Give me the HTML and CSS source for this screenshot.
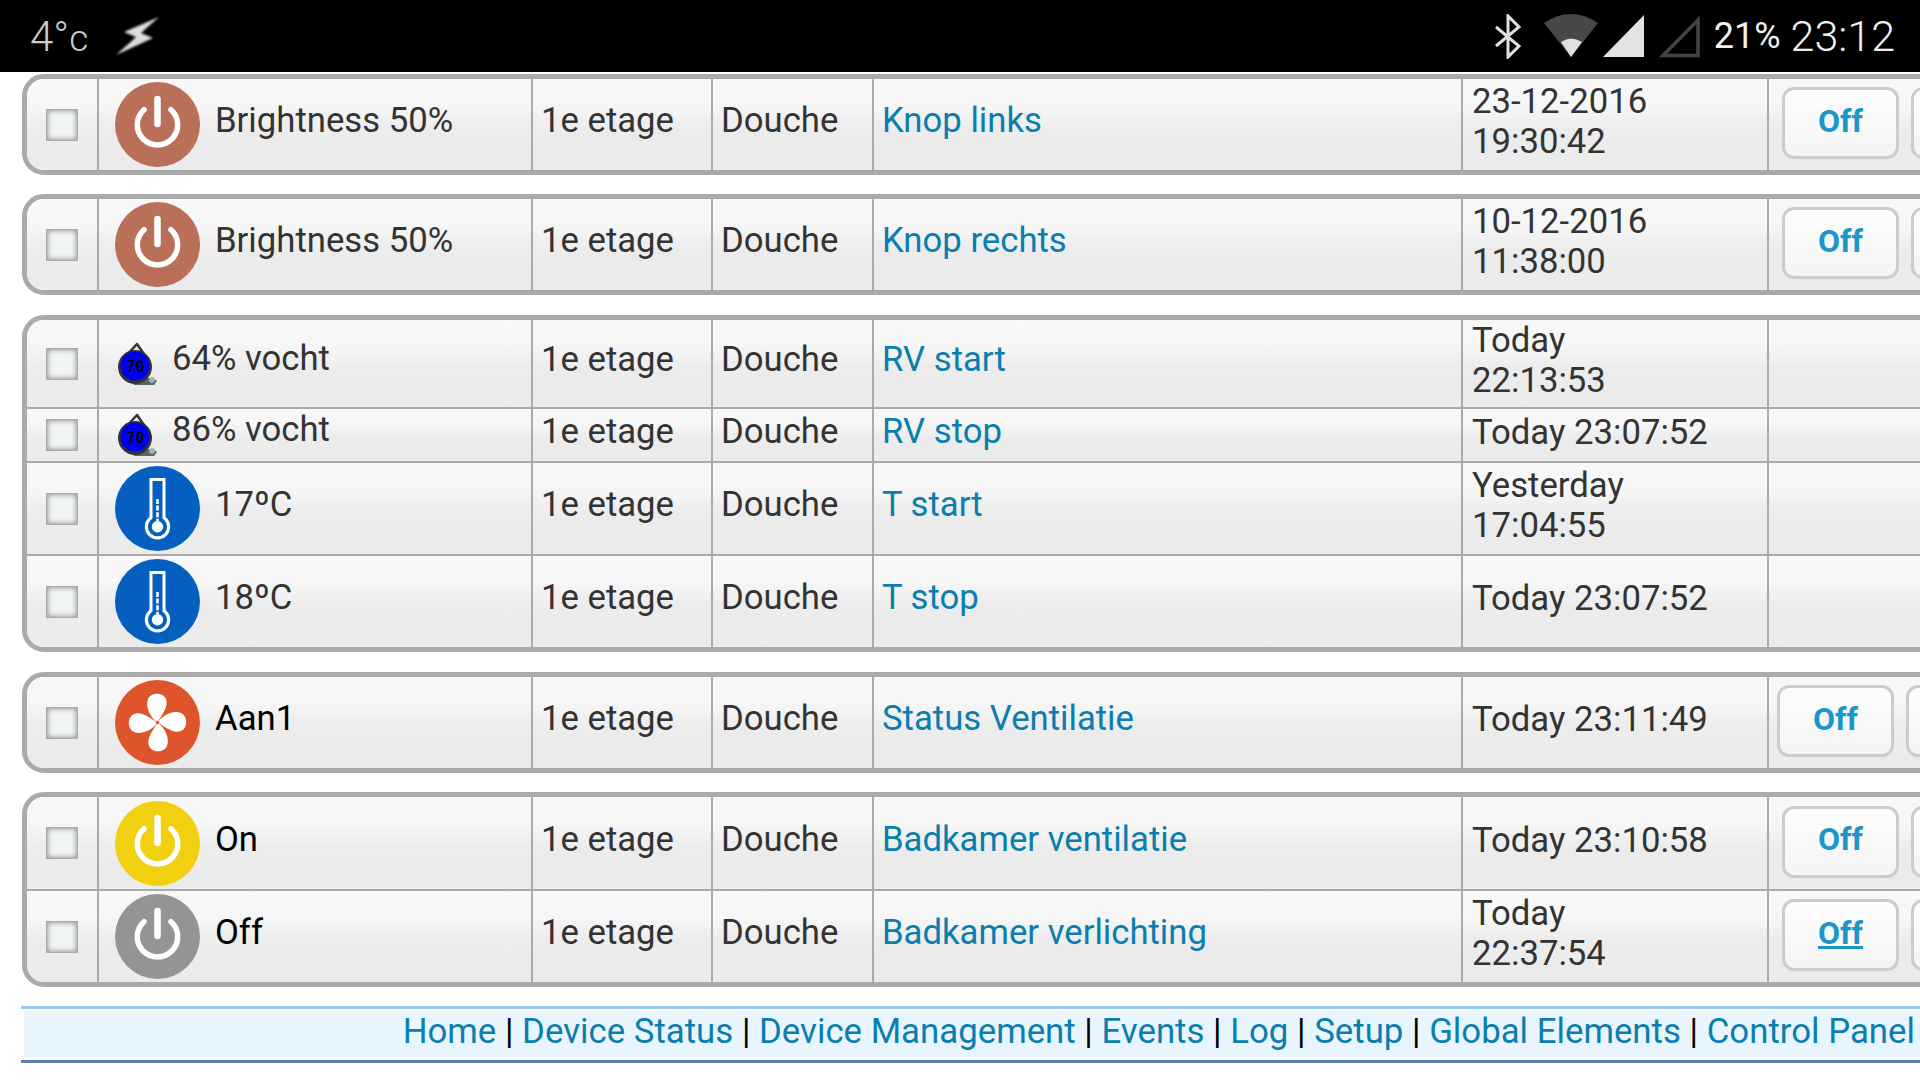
FILE: index.html
```html
<!DOCTYPE html>
<html lang="en">
<head>
    <meta charset="UTF-8">
    <meta name="viewport" content="width=device-width, initial-scale=1.0">
    <title>Device Status</title>
    <link rel="stylesheet" href="styles.css">
</head>
<body>

    <svg class="defs" width="0" height="0">
        <defs>
            <g id="power">
                <path d="M29 27.7A20.2 20.2 0 1 0 56 27.7" fill="none" stroke="#fff" stroke-width="5.5" stroke-linecap="round"/>
                <path d="M42.5 17V42" fill="none" stroke="#fff" stroke-width="6.5" stroke-linecap="round"/>
            </g>
            <g id="thermo">
                <circle cx="42.5" cy="42.5" r="42.5" fill="#045fbf"/>
                <rect x="34.5" y="12" width="16" height="42" fill="#fff"/>
                <circle cx="42.5" cy="60.7" r="12.7" fill="#fff"/>
                <circle cx="42.5" cy="60.7" r="9.6" fill="#045fbf"/>
                <rect x="37.5" y="15" width="10" height="42" fill="#045fbf"/>
                <circle cx="42.5" cy="60.7" r="5.7" fill="#fff"/>
                <path d="M42.5 33V55" stroke="#fff" stroke-width="2.6" stroke-dasharray="5 1.6"/>
            </g>
            <g id="drop">
                <path d="M21 2L9 15H30Z" fill="#e8e8e8" stroke="#333" stroke-width="2.5" stroke-linejoin="round"/>
                <path d="M16 36H37L41 39L38 43H18Z" fill="#4f6a6a"/>
                <circle cx="36" cy="38" r="3" fill="#a4b0b0"/>
                <circle cx="19" cy="25" r="17" fill="#333"/>
                <circle cx="19" cy="24" r="14.5" fill="#0000f0"/>
                <text x="19" y="30" class="drop-label">70</text>
            </g>
        </defs>
    </svg>

    <div class="status-bar">
        <div class="status-left">
            <span class="temp">4°<small>c</small></span>
            <svg class="bolt" width="48" height="48" viewBox="0 0 48 48">
                <polygon points="46,5 11,20 23,25 3,43 40,26 28,21" fill="#ddd"/>
            </svg>
        </div>
        <div class="status-right">
            <svg class="sys-icon bt" width="29" height="45" viewBox="0 0 29 45">
                <path d="M2 13L25 32L14 43V2L25 13L2 32" fill="none" stroke="#e0e0e0" stroke-width="3"/>
            </svg>
            <svg class="sys-icon wifi" width="54" height="44" viewBox="0 0 54 44">
                <path d="M0 9Q27 -9 54 9L27 43Z" fill="#484848"/>
                <path d="M17 28Q27 21 38 28L27 43Z" fill="#e0e0e0"/>
            </svg>
            <svg class="sys-icon signal" width="42" height="44" viewBox="0 0 42 44">
                <polygon points="0,43 41,43 41,1" fill="#e3e3e3"/>
            </svg>
            <svg class="sys-icon signal-off" width="44" height="44" viewBox="0 0 44 44">
                <polygon points="6,41.5 41,41.5 41,6" fill="none" stroke="#444" stroke-width="3.5"/>
            </svg>
            <span class="battery">21%</span>
            <span class="clock">23:12</span>
        </div>
    </div>

    <div class="groups">

        <div class="group">
            <table class="devices">
                <colgroup><col class="c-check"><col class="c-state"><col class="c-floor"><col class="c-room"><col class="c-name"><col class="c-seen"><col></colgroup>
                <tr class="row-full">
                    <td class="check"><input type="checkbox" class="row-check"></td>
                    <td class="state"><div class="state-inner">
                        <svg class="icon" width="85" height="85" viewBox="0 0 85 85"><circle cx="42.5" cy="42.5" r="42.5" fill="#b96f58"/><use href="#power"/></svg>
                        <span class="state-text">Brightness 50%</span>
                    </div></td>
                    <td>1e etage</td>
                    <td>Douche</td>
                    <td><a href="#" class="name">Knop links</a></td>
                    <td class="seen">23-12-2016<br>19:30:42</td>
                    <td class="actions"><div class="btns"><a href="#" class="btn">Off</a><a href="#" class="btn"></a></div></td>
                </tr>
            </table>
        </div>

        <div class="group">
            <table class="devices">
                <colgroup><col class="c-check"><col class="c-state"><col class="c-floor"><col class="c-room"><col class="c-name"><col class="c-seen"><col></colgroup>
                <tr class="row-full">
                    <td class="check"><input type="checkbox" class="row-check"></td>
                    <td class="state"><div class="state-inner">
                        <svg class="icon" width="85" height="85" viewBox="0 0 85 85"><circle cx="42.5" cy="42.5" r="42.5" fill="#b96f58"/><use href="#power"/></svg>
                        <span class="state-text">Brightness 50%</span>
                    </div></td>
                    <td>1e etage</td>
                    <td>Douche</td>
                    <td><a href="#" class="name">Knop rechts</a></td>
                    <td class="seen">10-12-2016<br>11:38:00</td>
                    <td class="actions"><div class="btns"><a href="#" class="btn">Off</a><a href="#" class="btn"></a></div></td>
                </tr>
            </table>
        </div>

        <div class="group group-wide">
            <table class="devices">
                <colgroup><col class="c-check"><col class="c-state"><col class="c-floor"><col class="c-room"><col class="c-name"><col class="c-seen"><col></colgroup>
                <tr class="row-mid">
                    <td class="check"><input type="checkbox" class="row-check"></td>
                    <td class="state"><div class="state-inner small">
                        <svg class="icon-small" width="43" height="44" viewBox="0 0 43 44"><use href="#drop"/></svg>
                        <span class="state-text">64% vocht</span>
                    </div></td>
                    <td>1e etage</td>
                    <td>Douche</td>
                    <td><a href="#" class="name">RV start</a></td>
                    <td class="seen">Today<br>22:13:53</td>
                    <td></td>
                </tr>
                <tr class="row-short">
                    <td class="check"><input type="checkbox" class="row-check"></td>
                    <td class="state"><div class="state-inner small">
                        <svg class="icon-small" width="43" height="44" viewBox="0 0 43 44"><use href="#drop"/></svg>
                        <span class="state-text">86% vocht</span>
                    </div></td>
                    <td>1e etage</td>
                    <td>Douche</td>
                    <td><a href="#" class="name">RV stop</a></td>
                    <td class="seen">Today 23:07:52</td>
                    <td></td>
                </tr>
                <tr class="row-full">
                    <td class="check"><input type="checkbox" class="row-check"></td>
                    <td class="state"><div class="state-inner">
                        <svg class="icon" width="85" height="85" viewBox="0 0 85 85"><use href="#thermo"/></svg>
                        <span class="state-text">17ºC</span>
                    </div></td>
                    <td>1e etage</td>
                    <td>Douche</td>
                    <td><a href="#" class="name">T start</a></td>
                    <td class="seen">Yesterday<br>17:04:55</td>
                    <td></td>
                </tr>
                <tr class="row-full">
                    <td class="check"><input type="checkbox" class="row-check"></td>
                    <td class="state"><div class="state-inner">
                        <svg class="icon" width="85" height="85" viewBox="0 0 85 85"><use href="#thermo"/></svg>
                        <span class="state-text">18ºC</span>
                    </div></td>
                    <td>1e etage</td>
                    <td>Douche</td>
                    <td><a href="#" class="name">T stop</a></td>
                    <td class="seen">Today 23:07:52</td>
                    <td></td>
                </tr>
            </table>
        </div>

        <div class="group">
            <table class="devices">
                <colgroup><col class="c-check"><col class="c-state"><col class="c-floor"><col class="c-room"><col class="c-name"><col class="c-seen"><col></colgroup>
                <tr class="row-full">
                    <td class="check"><input type="checkbox" class="row-check"></td>
                    <td class="state"><div class="state-inner">
                        <svg class="icon" width="85" height="85" viewBox="0 0 85 85">
                            <circle cx="42.5" cy="42.5" r="42.5" fill="#de552b"/>
                            <g fill="#fff">
                                <path id="petal" d="M42.5 42.5C35 37 30 27 33 19C36 12 48 12 51 19C54 27 46 36 42.5 42.5Z"/>
                                <use href="#petal" transform="rotate(90 42.5 42.5)"/>
                                <use href="#petal" transform="rotate(180 42.5 42.5)"/>
                                <use href="#petal" transform="rotate(270 42.5 42.5)"/>
                            </g>
                            <circle cx="42.5" cy="42.5" r="1.8" fill="#de552b"/>
                        </svg>
                        <span class="state-text on">Aan1</span>
                    </div></td>
                    <td>1e etage</td>
                    <td>Douche</td>
                    <td><a href="#" class="name">Status Ventilatie</a></td>
                    <td class="seen">Today 23:11:49</td>
                    <td class="actions"><div class="btns shifted"><a href="#" class="btn">Off</a><a href="#" class="btn"></a></div></td>
                </tr>
            </table>
        </div>

        <div class="group">
            <table class="devices">
                <colgroup><col class="c-check"><col class="c-state"><col class="c-floor"><col class="c-room"><col class="c-name"><col class="c-seen"><col></colgroup>
                <tr class="row-wide">
                    <td class="check"><input type="checkbox" class="row-check"></td>
                    <td class="state"><div class="state-inner">
                        <svg class="icon" width="85" height="85" viewBox="0 0 85 85"><circle cx="42.5" cy="42.5" r="42.5" fill="#f1d010"/><use href="#power"/></svg>
                        <span class="state-text on">On</span>
                    </div></td>
                    <td>1e etage</td>
                    <td>Douche</td>
                    <td><a href="#" class="name">Badkamer ventilatie</a></td>
                    <td class="seen">Today 23:10:58</td>
                    <td class="actions"><div class="btns"><a href="#" class="btn">Off</a><a href="#" class="btn"></a></div></td>
                </tr>
                <tr class="row-full">
                    <td class="check"><input type="checkbox" class="row-check"></td>
                    <td class="state"><div class="state-inner">
                        <svg class="icon" width="85" height="85" viewBox="0 0 85 85"><circle cx="42.5" cy="42.5" r="42.5" fill="#949494"/><use href="#power"/></svg>
                        <span class="state-text on">Off</span>
                    </div></td>
                    <td>1e etage</td>
                    <td>Douche</td>
                    <td><a href="#" class="name">Badkamer verlichting</a></td>
                    <td class="seen">Today<br>22:37:54</td>
                    <td class="actions"><div class="btns"><a href="#" class="btn hover">Off</a><a href="#" class="btn"></a></div></td>
                </tr>
            </table>
        </div>

    </div>

    <div class="nav">
        <div class="nav-inner">
            <a href="#">Home</a> | <a href="#">Device Status</a> | <a href="#">Device Management</a> | <a href="#">Events</a> | <a href="#">Log</a> | <a href="#">Setup</a> | <a href="#">Global Elements</a> | <a href="#">Control Panel</a>
        </div>
    </div>

</body>
</html>
```

FILE: styles.css
```css
* {
    box-sizing: border-box;
}

html, body {
    height: 100%;
}

body {
    margin: 0;
    overflow: hidden;
    background: #fff;
    font-family: Roboto, sans-serif;
    font-size: 34.7px;
    color: #333;
}

.defs {
    position: absolute;
}

/* phone status bar */
.status-bar {
    height: 72px;
    background: #000;
    display: flex;
    justify-content: space-between;
    align-items: center;
    padding: 0 25px 0 30px;
}

.status-left,
.status-right {
    display: flex;
    align-items: center;
}

.temp {
    font-size: 42px;
    font-weight: 300;
    color: #ccc;
}

.temp small {
    font-size: 37px;
}

.bolt {
    margin-left: 25px;
    filter: blur(1px);
}

.sys-icon {
    display: block;
}

.bt { margin-right: 21px; }
.wifi { margin-right: 5px; }
.signal { margin-right: 12px; }
.signal-off { margin-right: 13px; }

.battery {
    font-size: 36px;
    color: #f0f0f0;
    margin-right: 10px;
}

.clock {
    font-size: 43px;
    font-weight: 300;
    color: #f0f0f0;
}

/* device tables */
.groups {
    display: flex;
    flex-direction: column;
    gap: 19px;
    padding: 2px 0 0 22px;
}

.group {
    width: 2200px;
    border: 5px solid #aaa;
    border-radius: 22px;
    overflow: hidden;
    flex: none;
}

.group-wide {
    margin: 1px 0;
}

.devices {
    table-layout: fixed;
    width: 100%;
    border-collapse: separate;
    border-spacing: 0;
}

.c-check { width: 72px; }
.c-state { width: 434px; }
.c-floor { width: 180px; }
.c-room { width: 161px; }
.c-name { width: 589px; }
.c-seen { width: 306px; }

.devices td {
    box-sizing: content-box;
    padding: 0 0 9px 8px;
    line-height: 40px;
    vertical-align: middle;
    border-right: 2px solid #aaa;
    border-bottom: 2px solid #aaa;
    background: linear-gradient(#f8f8f8 0, #f6f6f6 30%, #ececec 55%, #ebebeb 100%);
}

.devices td.seen {
    padding: 0 0 7px 9px;
}

.devices tr:last-child td {
    border-bottom: none;
}

.devices td:last-child {
    border-right: none;
}

/* cell height + 9px bottom padding gives the row height */
.row-full td { height: 82px; }
.row-wide td { height: 83px; }
.row-mid td { height: 78px; }
.row-short td { height: 43px; }

.devices td.check {
    padding: 0;
    text-align: center;
}

.row-check {
    appearance: none;
    display: block;
    width: 32px;
    height: 32px;
    margin: 0 0 0 19px;
    background: #f1f5f5;
    border: 1px solid #aaa;
    box-shadow: inset 0 0 5px 1px #999;
}

.devices td.state {
    padding: 0 0 0 16px;
}

.state-inner {
    display: flex;
    align-items: center;
    gap: 15px;
}

.state-inner.small {
    gap: 13px;
}

.state-text {
    margin-bottom: 9px;
}

.small .state-text {
    margin-bottom: 12px;
}

.state-text.on {
    color: #000;
}

.icon,
.icon-small {
    display: block;
    flex: none;
}

.icon-small {
    margin-left: 1px;
    filter: blur(0.4px);
}

.drop-label {
    font-family: "DejaVu Sans Mono", monospace;
    font-size: 15px;
    font-weight: bold;
    text-anchor: middle;
    fill: #000;
}

.name {
    color: #0a7eae;
    text-decoration: none;
}

/* on/off buttons */
.devices td.actions {
    padding: 0;
}

.btns {
    display: flex;
    gap: 12px;
    padding-left: 13px;
    margin-top: -3px;
}

.btns.shifted {
    padding-left: 8px;
}

.btn {
    display: flex;
    justify-content: center;
    align-items: center;
    width: 117px;
    height: 72px;
    padding-bottom: 5px;
    background: linear-gradient(#fdfdfd, #f4f4f4);
    border: 3px solid #ccc;
    border-radius: 12px;
    font-size: 32px;
    font-weight: 700;
    color: #1a96c8;
    text-decoration: none;
}

.btn.hover {
    text-decoration: underline;
}

/* bottom links */
.nav {
    margin: 19px 0 0 21px;
    height: 57px;
    border-top: 3px solid #9cc8f8;
    border-bottom: 3px solid #5a7fa8;
    padding: 2px 0 3px 3px;
    color: #000;
}

.nav-inner {
    height: 46px;
    background: #e9f5fe;
    text-align: right;
    padding-right: 5px;
    font-size: 34.8px;
    line-height: 40px;
    white-space: nowrap;
}

.nav-inner a {
    color: #0a7eae;
    text-decoration: none;
}
```
